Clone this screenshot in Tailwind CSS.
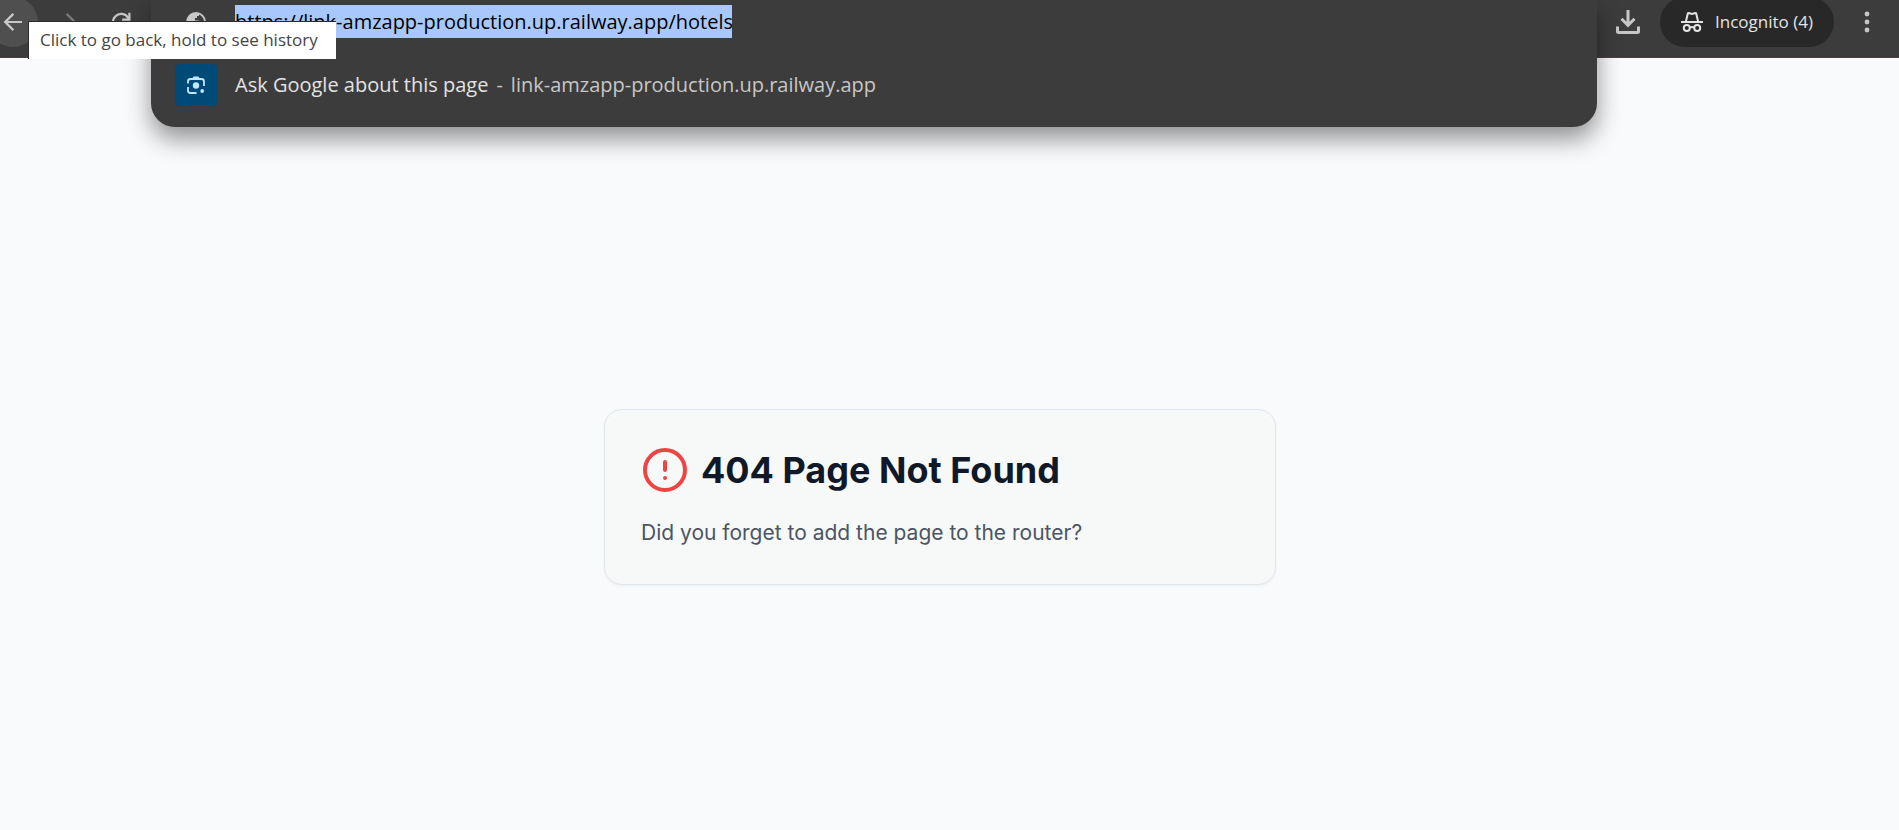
<!DOCTYPE html>
<html lang="en">
<head>
<meta charset="utf-8">
<title>404 Page Not Found</title>
<script src="https://cdn.jsdelivr.net/npm/@tailwindcss/browser@4"></script>
</head>
<body class="flex min-h-screen flex-col bg-[#f9fafc] font-['Inter',sans-serif]">
  <header class="relative z-10 flex h-[58px] items-center border-b border-[#4a4040] bg-[#3c3c3c] pb-3.5 font-['Open_Sans','Noto_Sans',sans-serif] text-[#c7c7c7]">
    <nav aria-label="Browser navigation" class="flex items-center">
      <button aria-label="Back" class="-ml-3 grid size-[50px] place-items-center rounded-full bg-[#4f4f4f]">
        <svg class="size-7" viewBox="0 0 24 24" fill="currentColor"><path d="M7.600 12.900 13 18.300 11.600 19.700 3.900 12 11.600 4.300 13 5.700 7.600 11.100H19.700V12.900Z"/></svg>
      </button>
      <button aria-label="Forward" class="ml-1 grid size-[50px] place-items-center text-[#7a7a7a]">
        <svg class="size-7" viewBox="0 0 24 24" fill="currentColor"><path d="M16.400 11.100 11 5.700 12.400 4.300 20.100 12 12.400 19.700 11 18.300 16.400 12.900H4.300V11.100Z"/></svg>
      </button>
      <button aria-label="Reload" class="ml-1 grid size-[50px] place-items-center">
        <svg class="size-7" viewBox="0 0 24 24" fill="none" stroke="currentColor" stroke-width="1.900"><path d="M18.500 15A7 7 0 1 1 18 8.200L19 10M19.200 4V10H13"/></svg>
      </button>
    </nav>
    <div class="ml-auto flex items-center">
      <button aria-label="Downloads" class="mr-5">
        <svg class="size-6" viewBox="0 0 24 24" fill="none" stroke="currentColor" stroke-width="3"><path d="M12 0V15.500M5.500 8.800 12 15.300 18.500 8.800M1.500 16.500V21.500Q1.500 22.500 2.500 22.500H21.500Q22.500 22.500 22.500 21.500V16.500"/></svg>
      </button>
      <button class="flex h-[50px] w-[174px] items-center justify-center gap-3 rounded-full bg-[#282828] text-[17px] text-[#e3e3e3]">
        <svg class="h-5 w-[22px]" viewBox="0 0 22 20" fill="none" stroke="currentColor" stroke-width="2"><path d="M0 10H22M4.800 10 6.800 1.600Q7 1 7.700 1.100L11 1.900 14.300 1.100Q15 1 15.200 1.600L17.200 10"/><circle cx="5.800" cy="16" r="3"/><circle cx="16.200" cy="16" r="3"/><path d="M8.800 15.700Q11 14.300 13.200 15.700"/></svg>
        <span>Incognito (4)</span>
      </button>
      <button aria-label="Menu" class="mr-5 ml-[21px]">
        <svg class="size-6" viewBox="0 0 24 24" fill="currentColor"><circle cx="12" cy="4" r="2.400"/><circle cx="12" cy="12" r="2.400"/><circle cx="12" cy="20" r="2.400"/></svg>
      </button>
    </div>

    <section aria-label="Address bar" class="absolute top-0 right-[302px] left-[151px] flex flex-col rounded-b-3xl bg-[#3c3c3c] px-6 pt-[5px] pb-[21px] text-xl shadow-[0_12px_24px_rgba(0,0,0,0.42)]">
      <div class="flex h-[33px] items-center gap-[18px]">
        <span class="grid w-[42px] place-items-center">
          <svg class="size-5" viewBox="0 0 20 20"><circle cx="10" cy="10" r="10" fill="#c7c7c7"/><path d="M13 2.500C15.500 3.500 17.500 6 18 9L15 9.500 12 8.500 9 8.500 9 6 11 6 11 4 13 4ZM2 9 8 13 8 17.500C4.500 17 2 14 2 9Z" fill="#3c3c3c"/></svg>
        </span>
        <input aria-label="Address" value="https://link-amzapp-production.up.railway.app/hotels" class="h-[33px] w-[497px] bg-[#a8c7fa] text-black outline-none">
      </div>
      <a href="#" class="mt-[26px] flex items-center gap-[18px]">
        <span class="grid size-[42px] place-items-center rounded bg-[#004a77]">
          <svg class="size-5" viewBox="0 0 20 20" fill="none" stroke="#c2e7ff" stroke-width="1.800"><path d="M2 8.500V6.500Q2 4 4.500 4H15.500Q18 4 18 6.500V11M2 12V15.500Q2 18 4.500 18H10.500"/><path d="M6 4 7.500 1.500H12.500L14 4Z" fill="#c2e7ff" stroke="none"/><circle cx="10" cy="10.500" r="3.200" fill="#c2e7ff" stroke="none"/><circle cx="16.200" cy="16" r="1.900" fill="#c2e7ff" stroke="none"/></svg>
        </span>
        <span class="flex gap-2 text-[#c7c7c7]"><span class="text-[#e3e3e3]">Ask Google about this page</span><span>-</span><span>link-amzapp-production.up.railway.app</span></span>
      </a>
    </section>
    <div role="tooltip" class="absolute top-[21px] left-7 h-[38px] w-[308px] border-t border-l border-[#2b2b2b] bg-white px-[11px] text-[17px] leading-9 whitespace-nowrap text-[#444]">Click to go back, hold to see history</div>
  </header>

  <main class="flex flex-1 items-center justify-center pt-[106px] pr-[19px]">
    <article class="w-full max-w-2xl rounded-[18px] border border-[#e1e8ed] bg-[#f7f9f9] p-9 shadow-[0_1px_3px_rgba(0,0,0,0.05)]">
      <div class="flex items-center gap-3">
        <svg class="size-12 text-[#ef4444]" viewBox="0 0 24 24" fill="none" stroke="currentColor" stroke-width="2" stroke-linecap="round"><circle cx="12" cy="12" r="10"/><path d="M12 8V12M12 16H12.010"/></svg>
        <h1 class="text-4xl font-bold text-[#111827]">404 Page Not Found</h1>
      </div>
      <p class="mt-6 text-[21px] leading-[30px] text-[#4b5563]">Did you forget to add the page to the router?</p>
    </article>
  </main>
</body>
</html>
